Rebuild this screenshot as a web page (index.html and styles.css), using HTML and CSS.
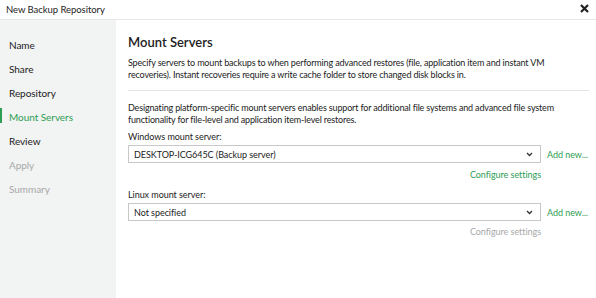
FILE: index.html
```html
<!DOCTYPE html>
<html>
<head>
<meta charset="utf-8">
<link rel="stylesheet" href="styles.css">
</head>
<body>
<div class="window">
  <div class="titlebar">
    <span class="title">New Backup Repository</span>
    <svg class="close" width="9" height="9" viewBox="0 0 9 9"><path d="M1 1 L8 8 M8 1 L1 8" stroke="#222" stroke-width="2.2"/></svg>
  </div>
  <div class="body">
    <nav class="sidebar">
      <div class="step">Name</div>
      <div class="step">Share</div>
      <div class="step">Repository</div>
      <div class="step active">Mount Servers</div>
      <div class="step">Review</div>
      <div class="step disabled">Apply</div>
      <div class="step disabled">Summary</div>
    </nav>
    <main class="content">
      <h1 class="heading">Mount Servers</h1>
      <p class="desc">Specify servers to mount backups to when performing advanced restores (file, application item and instant VM recoveries). Instant recoveries require a write cache folder to store changed disk blocks in.</p>
      <div class="sep"></div>
      <p class="desc2">Designating platform-specific mount servers enables support for additional file systems and advanced file system functionality for file-level and application item-level restores.</p>
      <div class="label">Windows mount server:</div>
      <div class="row">
        <div class="select"><span>DESKTOP-ICG645C (Backup server)</span><svg class="chev" width="7" height="5" viewBox="0 0 7 5"><path d="M1 1 L3.5 3.5 L6 1" fill="none" stroke="#333" stroke-width="1.3"/></svg></div>
        <a class="link">Add new...</a>
      </div>
      <div class="cfg"><a class="link">Configure settings</a></div>
      <div class="label l2">Linux mount server:</div>
      <div class="row">
        <div class="select"><span>Not specified</span><svg class="chev" width="7" height="5" viewBox="0 0 7 5"><path d="M1 1 L3.5 3.5 L6 1" fill="none" stroke="#333" stroke-width="1.3"/></svg></div>
        <a class="link">Add new...</a>
      </div>
      <div class="cfg cfg2"><a class="link off">Configure settings</a></div>
    </main>
  </div>
</div>
</body>
</html>
```
FILE: styles.css
```css
html, body { margin: 0; padding: 0; background: #fff; }
body { font-family: "Lato", "Noto Sans", sans-serif; font-size: 9px; letter-spacing: -0.05px; color: #222; }
.window { width: 596px; height: 298px; display: flex; flex-direction: column; overflow: hidden; }
.titlebar { height: 20px; display: flex; align-items: center; justify-content: space-between; padding: 0 7px 0 6px; border-bottom: 1px solid #e6e6e6; box-sizing: border-box; flex: none; }
.title { font-size: 9.5px; color: #222; }
.close { margin-top: -3px; }
.body { flex: 1; display: flex; }
.sidebar { width: 116px; background: #f2f3f3; padding-top: 15px; flex: none; }
.step { height: 24px; line-height: 12px; padding: 4px 0 0 9px; box-sizing: border-box; font-size: 10px; color: #222; position: relative; }
.step.active { color: #2e9e53; }
.step.active::before { content: ""; position: absolute; left: 0; top: 1px; width: 2px; height: 15px; background: #2e9e53; }
.step.disabled { color: #a8a8a8; }
.content { flex: 1; padding: 14px 7px 0 12px; }
.heading { margin: 0; font-size: 13px; font-weight: 600; color: #222; line-height: 16px; letter-spacing: 0; }
.desc { margin: 7px 0 0; line-height: 12px; width: 440px; letter-spacing: -0.16px; }
.sep { height: 1px; background: #e4e4e4; margin: 9px 0 0; width: 461px; }
.desc2 { margin: 11px 0 0; line-height: 12px; width: 440px; letter-spacing: -0.16px; }
.label { margin-top: 5px; line-height: 12px; }
.label.l2 { margin-top: 8px; }
.row { display: flex; align-items: center; margin-top: 2px; }
.select { width: 413px; height: 18px; border: 1px solid #c8c8c8; box-sizing: border-box; display: flex; align-items: center; justify-content: space-between; padding: 0 7px 0 5px; flex: none; }
.chev { flex: none; }
.link { color: #2e9e53; margin-left: 6px; white-space: nowrap; }
.cfg { width: 413px; text-align: right; margin-top: 6px; line-height: 12px; }
.cfg2 { margin-top: 5px; }
.cfg .link { margin-left: 0; }
.link.off { color: #a8a8a8; }
```
